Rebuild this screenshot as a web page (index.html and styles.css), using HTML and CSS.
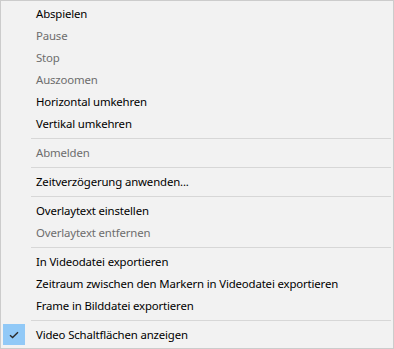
FILE: index.html
```html
<!DOCTYPE html>
<html lang="de">
<head>
    <meta charset="UTF-8">
    <title>Kontextmenü</title>
    <link rel="stylesheet" href="styles.css">
</head>
<body>
    <ul class="menu">
        <li class="item">Abspielen</li>
        <li class="item disabled">Pause</li>
        <li class="item disabled">Stop</li>
        <li class="item disabled">Auszoomen</li>
        <li class="item">Horizontal umkehren</li>
        <li class="item">Vertikal umkehren</li>
        <li class="separator"></li>
        <li class="item disabled">Abmelden</li>
        <li class="separator"></li>
        <li class="item">Zeitverzögerung anwenden...</li>
        <li class="separator"></li>
        <li class="item">Overlaytext einstellen</li>
        <li class="item disabled">Overlaytext entfernen</li>
        <li class="separator"></li>
        <li class="item">In Videodatei exportieren</li>
        <li class="item">Zeitraum zwischen den Markern in Videodatei exportieren</li>
        <li class="item">Frame in Bilddatei exportieren</li>
        <li class="separator"></li>
        <li class="item checked">
            <span class="check">
                <svg width="10" height="8" viewBox="0 0 10 8">
                    <path d="M1 4.2 L3.6 6.6 L9 1.2" fill="none" stroke="#2b2b2b" stroke-width="1.4"/>
                </svg>
            </span>
            Video Schaltflächen anzeigen
        </li>
    </ul>
</body>
</html>
```

FILE: styles.css
```css
body {
    margin: 0;
    padding: 0;
    background-color: #f2f2f2;
}
.menu {
    list-style: none;
    margin: 0;
    padding: 2px 0;
    width: 392px;
    height: 343px;
    border: 1px solid #cccccc;
    background-color: #f2f2f2;
    font-family: "Noto Sans", "Open Sans", sans-serif;
    font-size: 11.4px;
    letter-spacing: -0.15px;
    color: #000;
}
.item {
    position: relative;
    height: 22px;
    line-height: 22px;
    padding-left: 35px;
    white-space: nowrap;
}
.item.disabled {
    color: #6d6d6d;
}
.separator {
    height: 1px;
    margin: 3px 2px 3px 30px;
    background-color: #d7d7d7;
}
.check {
    position: absolute;
    left: 2px;
    top: 0;
    width: 22px;
    height: 21px;
    background-color: #91c9f7;
    display: flex;
    align-items: center;
    justify-content: center;
}
.check svg {
    display: block;
}
```
